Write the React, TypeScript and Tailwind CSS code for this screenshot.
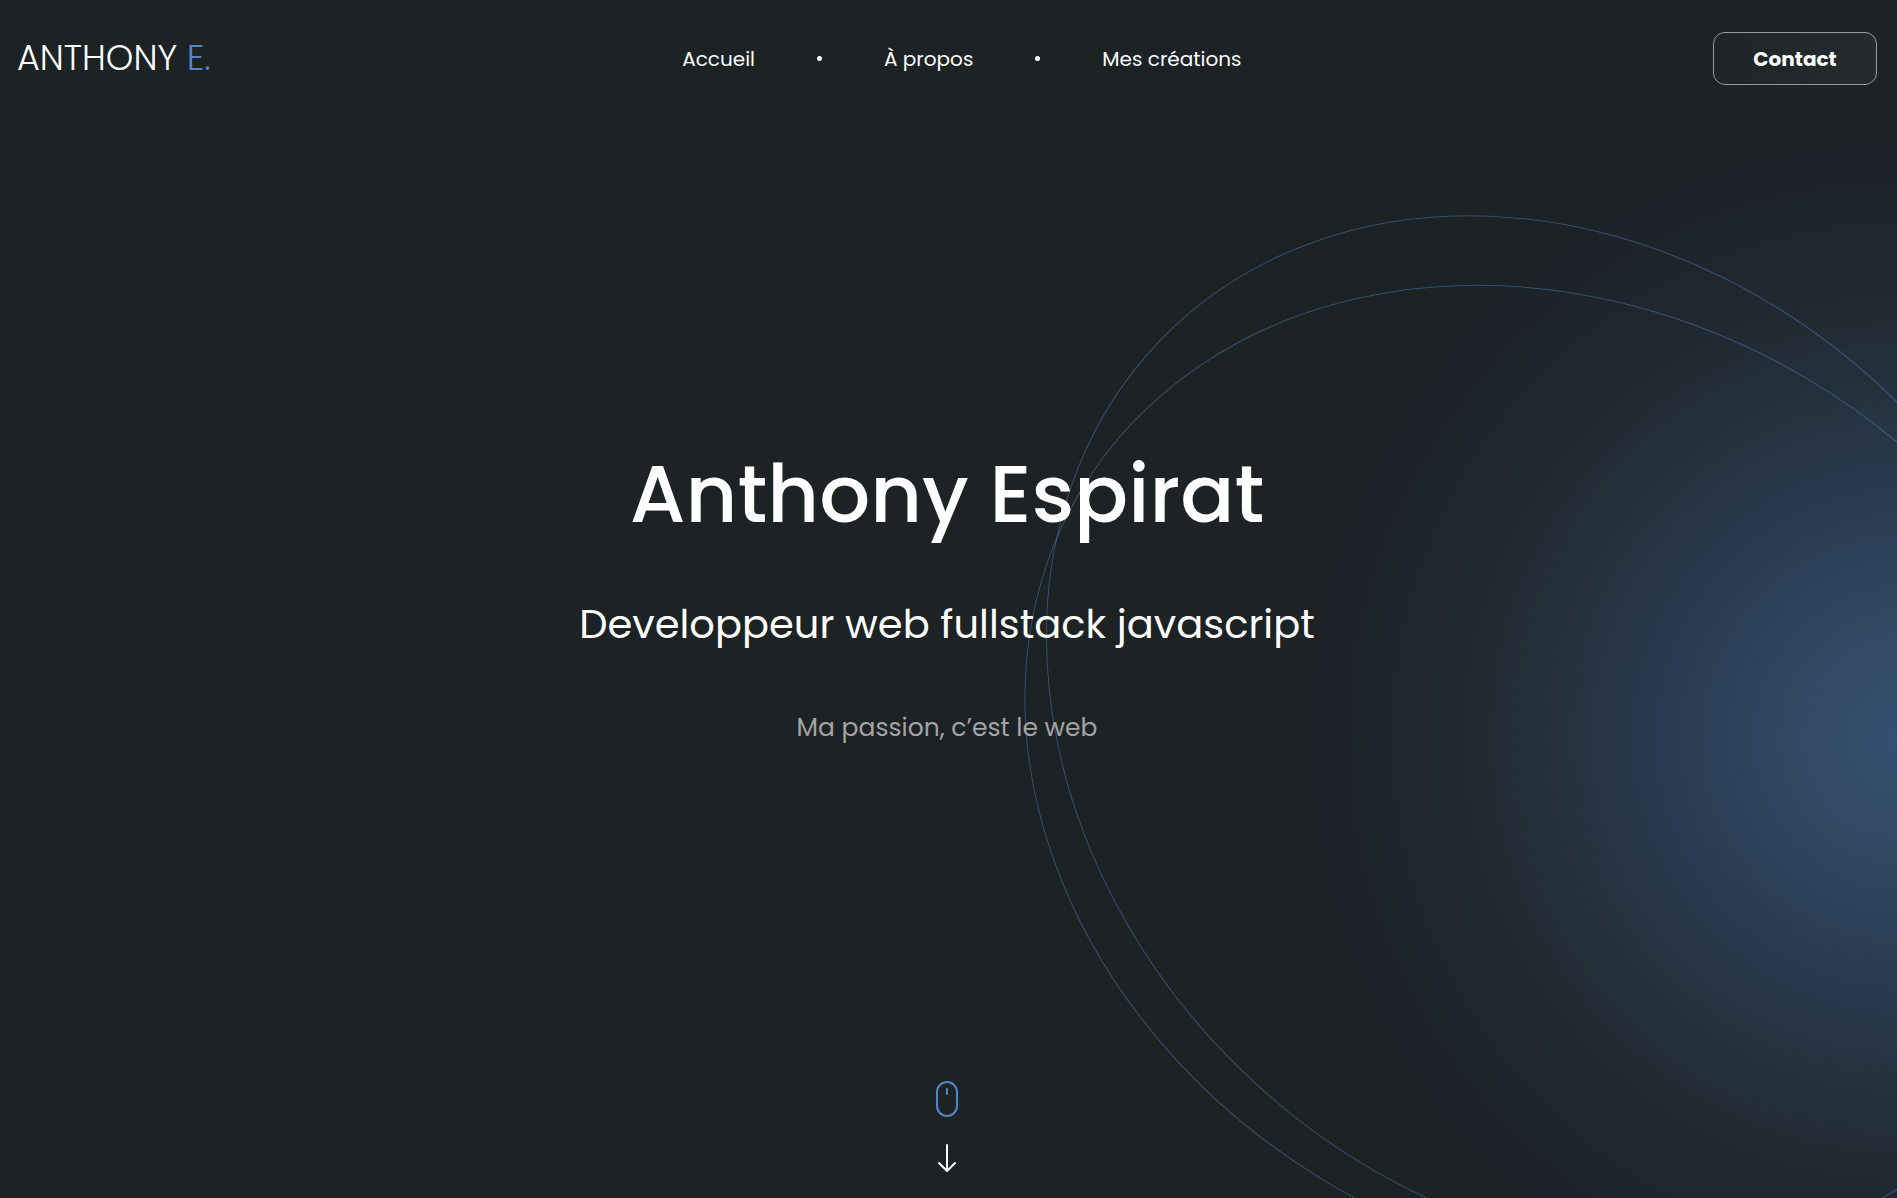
import React from "react";

const links = ["Accueil", "À propos", "Mes créations"];

function Backdrop() {
  return (
    <div aria-hidden="true" className="pointer-events-none absolute inset-0 overflow-hidden">
      <div className="h-full w-full bg-[radial-gradient(circle_at_calc(100%_+_10px)_738px,#35506f_0px,#334b68_90px,#2d4158_190px,#293b50_240px,#253441_330px,#212b34_420px,#1f262d_500px,#1d2328_580px,#1d2225_650px)]" />
      <svg className="absolute right-0 top-0 h-full w-[900px]" fill="none" stroke="#5a84c8" strokeOpacity="0.45">
        <ellipse cx="570" cy="734" rx="468" ry="566" transform="rotate(-45.7 570 734)" />
        <ellipse cx="571" cy="781" rx="468" ry="567" transform="rotate(-59.4 571 781)" />
      </svg>
    </div>
  );
}

function Header() {
  return (
    <header className="flex items-center justify-between py-8 pl-[17px] pr-5">
      <a href="#" className="pb-0.5 text-[35px] font-light leading-[50px]">
        ANTHONY <span className="text-[#5584c8]">E.</span>
      </a>
      <nav>
        <ul className="flex items-center gap-[62px] text-xl leading-[30px]">
          {links.map((label, i) => (
            <React.Fragment key={label}>
              {i > 0 && <li aria-hidden="true" className="size-[5px] rounded-full bg-white" />}
              <li>
                <a href="#">{label}</a>
              </li>
            </React.Fragment>
          ))}
        </ul>
      </nav>
      <button
        type="button"
        className="h-[53px] w-[164px] rounded-xl border border-[#9b9ea1] bg-linear-to-r from-white/[0.01] to-white/[0.04] text-xl font-bold leading-[30px]"
      >
        Contact
      </button>
    </header>
  );
}

export default function App() {
  return (
    <div className="relative flex min-h-screen flex-col bg-[#1d2225] font-[Poppins,Inter,sans-serif] text-white">
      <Backdrop />
      <div className="relative flex flex-1 flex-col">
        <Header />
        <main className="flex flex-1 flex-col pr-[3px]">
          <section className="flex flex-1 flex-col items-center justify-center text-center">
            <h1 className="text-[80px] font-medium leading-[120px]">Anthony Espirat</h1>
            <h2 className="mt-10 text-[40px] leading-[60px]">Developpeur web fullstack javascript</h2>
            <p className="mt-14 text-[25px] leading-[36px] text-[#a3a4a5]">Ma passion, c’est le web</p>
          </section>
          <a href="#" aria-label="Défiler vers le bas" className="mx-auto flex flex-col items-center pb-[25px] pt-[18px]">
            <svg width="24" height="38" viewBox="0 0 24 38" fill="none" stroke="#5584c8" strokeWidth="2" strokeLinecap="round">
              <rect x="2" y="1" width="20" height="34" rx="10" />
              <path d="M12 8v5" />
            </svg>
            <svg className="mt-6" width="24" height="30" viewBox="0 0 24 30" fill="none" stroke="#fff" strokeWidth="2" strokeLinecap="round" strokeLinejoin="round">
              <path d="M12 2v26M4 20l8 8 8-8" />
            </svg>
          </a>
        </main>
      </div>
    </div>
  );
}
